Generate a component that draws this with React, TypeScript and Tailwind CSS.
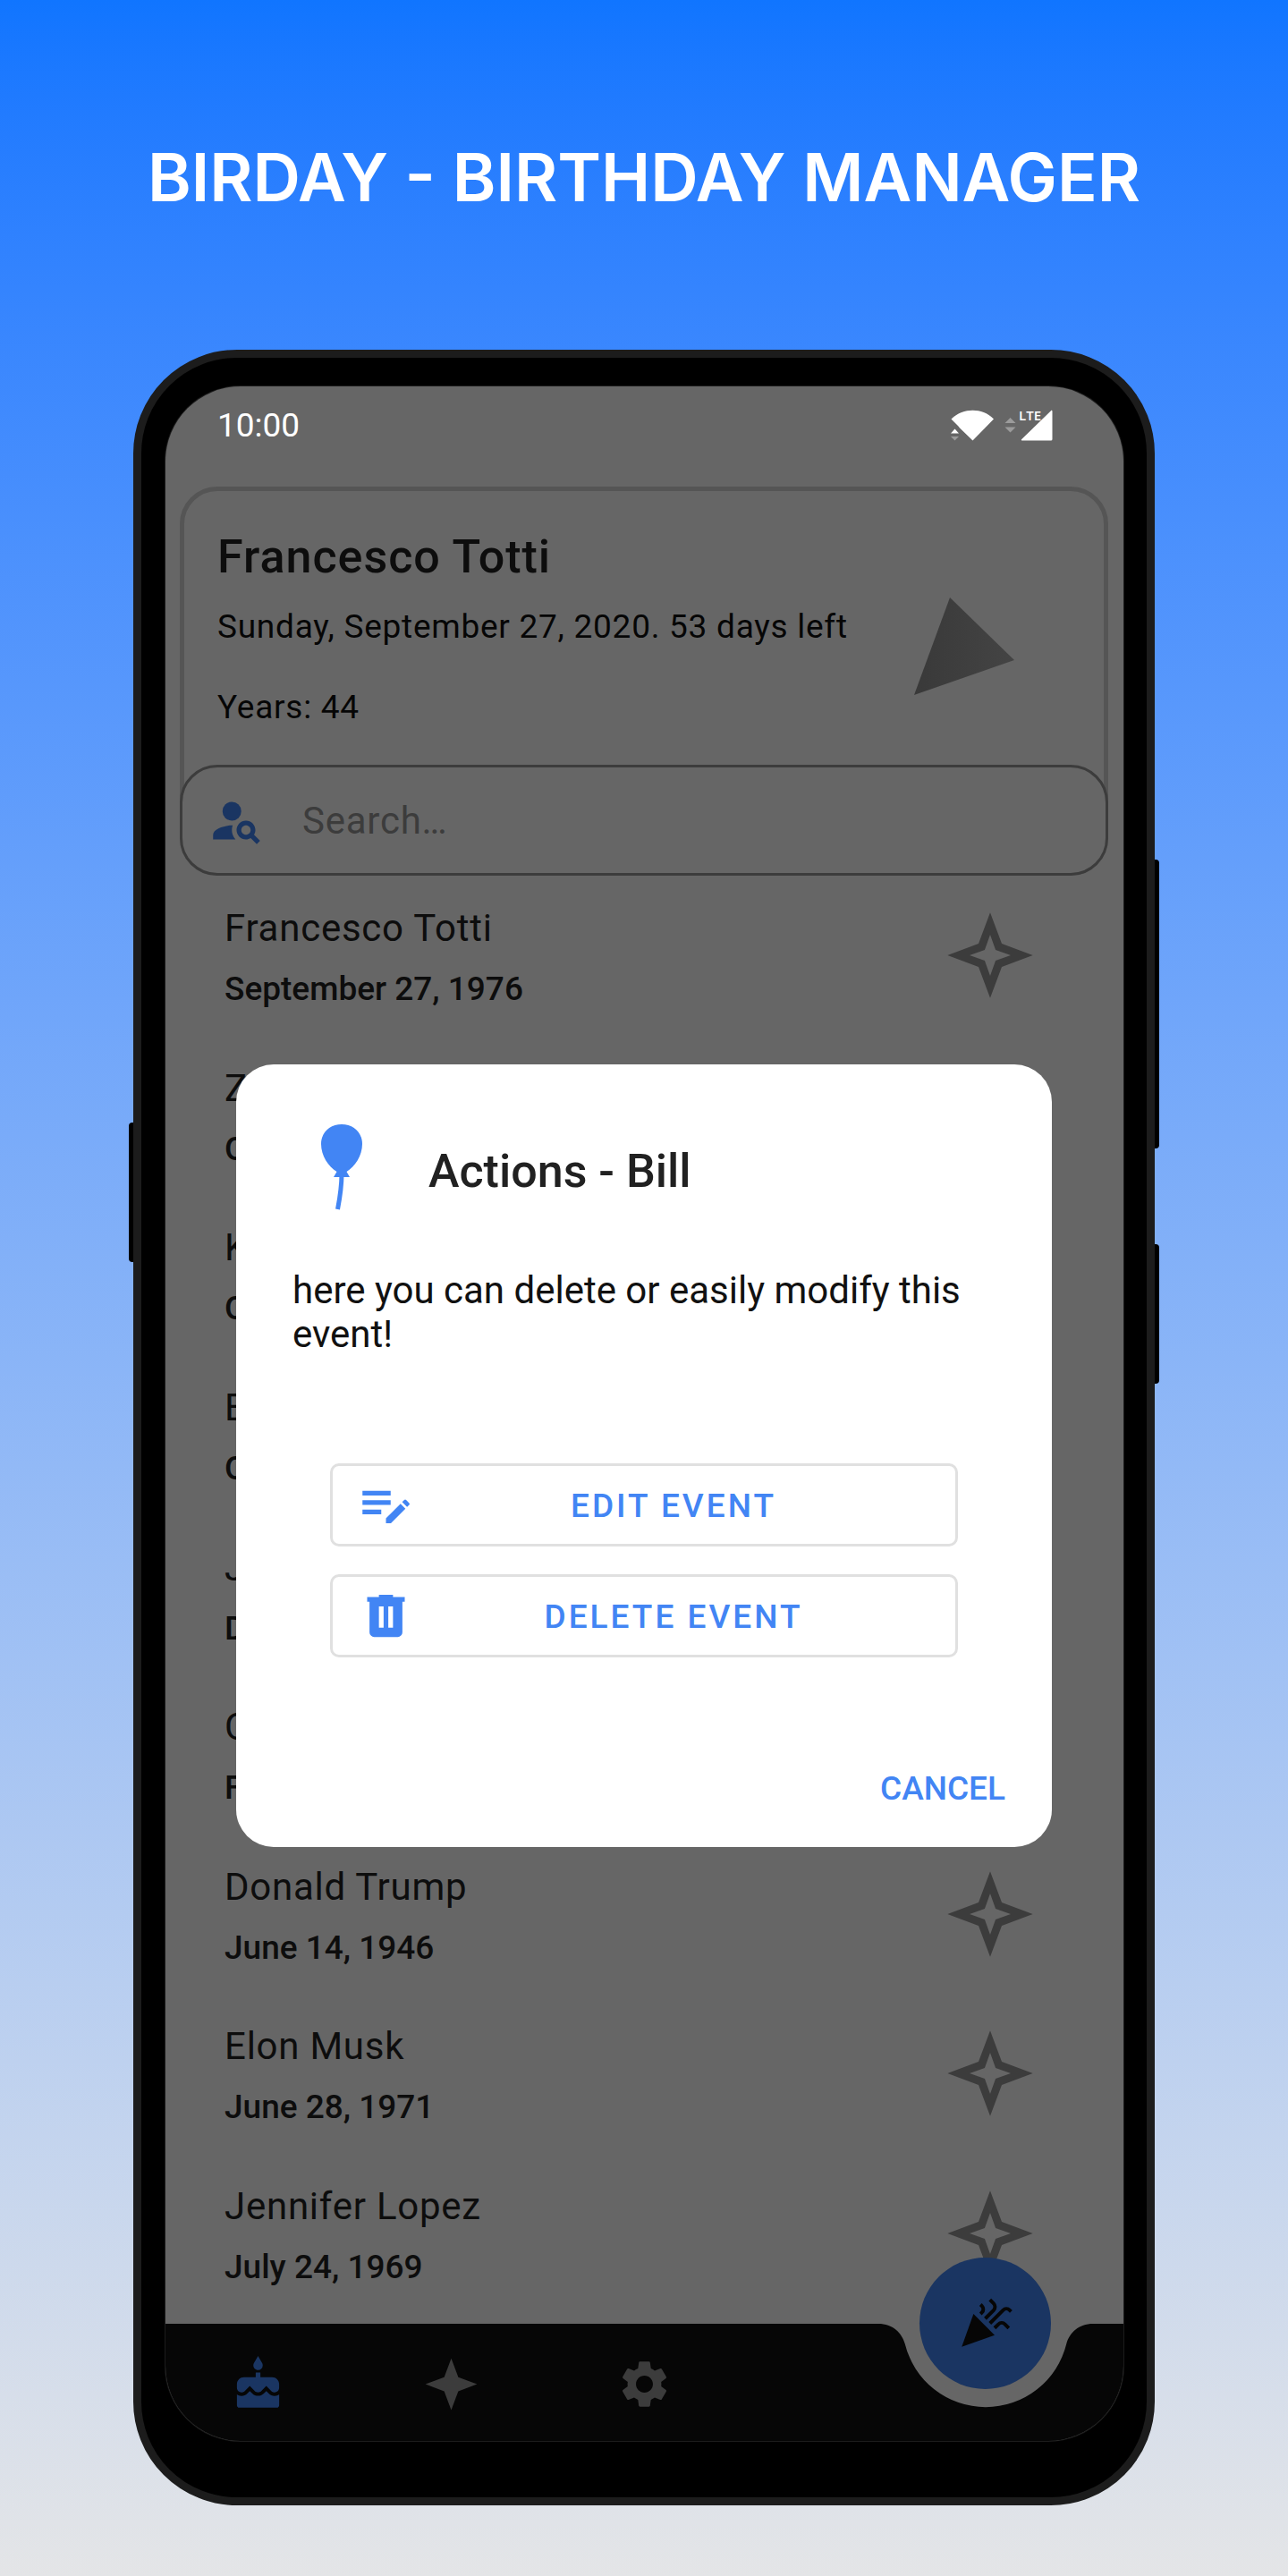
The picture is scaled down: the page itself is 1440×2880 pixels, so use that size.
import { MdCake, MdSettings, MdPersonSearch } from "react-icons/md";

type Person = { name: string; date: string };

const people: Person[] = [
  { name: "Francesco Totti", date: "September 27, 1976" },
  { name: "Zlatan Ibra", date: "October 3, 1981" },
  { name: "Kim Kard", date: "October 21, 1980" },
  { name: "Bill", date: "October 28, 1955" },
  { name: "Jay", date: "December 4, 1969" },
  { name: "Cristiano", date: "February 5, 1985" },
  { name: "Donald Trump", date: "June 14, 1946" },
  { name: "Elon Musk", date: "June 28, 1971" },
  { name: "Jennifer Lopez", date: "July 24, 1969" },
];

function StatusIcons() {
  return (
    <svg viewBox="0 0 114 36" className="h-9 w-[114px] overflow-visible" fill="#fff" aria-label="Wi-Fi and LTE signal">
      <path d="M0.5 10.5C8 3.5 16 .8 24.500 .8S41 3.500 48 10.500L24.500 34.500 10 20.500 8 18z" />
      <path d="M0 26.500l4.500-5 4.500 5z" />
      <path d="M0 30h9l-4.500 4.500z" opacity=".35" />
      <path d="M60.500 15l6-6 6 6zM60.500 19.500h12l-6 6z" opacity=".35" />
      <path d="M113.500 2v31a1.500 1.500 0 0 1-1.500 1.500H80c-1.200 0-1.500-.8-.7-1.600L112 1.200c.8-.8 1.500-.2 1.500.8z" />
      <text x="76" y="12" fontSize="15" fontWeight="600" fontFamily="Open Sans, sans-serif">LTE</text>
    </svg>
  );
}

function StarOutline() {
  return (
    <svg viewBox="0 0 24 24" className="size-[104px]" fill="#3c3c3c" fillRule="evenodd" aria-hidden="true">
      <path d="M12 1l3 8 8 3-8 3-3 8-3-8-8-3 8-3zM12 6.700l-1.400 3.900L6.700 12l3.900 1.400L12 17.300l1.400-3.900L17.300 12l-3.900-1.400z" />
    </svg>
  );
}

function Balloon() {
  return (
    <svg viewBox="0 0 48 96" className="h-24 w-12" fill="#4285f4" aria-hidden="true">
      <path d="M24 0C37 0 47 9 47 22c0 13-8 25-17.500 31l3.500 6H15l3.500-6C9 47 1 35 1 22 1 9 11 0 24 0z" />
      <path d="M24 55c0 14-2 27-4.500 40" fill="none" stroke="#4285f4" strokeWidth="5" />
    </svg>
  );
}

function EditIcon() {
  return (
    <svg viewBox="0 0 24 24" className="size-[63px]" fill="currentColor" aria-hidden="true">
      <path d="M2 6h12v2H2zM2 10h12v2H2zM2 14h8v2H2zM12 17.700l6.200-6.200 2.100 2.100-6.200 6.200H12zM18.900 10.800l.9-.9q.4-.4.8 0l1.300 1.300q.4.4 0 .8l-.9.9z" />
    </svg>
  );
}

function TrashIcon() {
  return (
    <svg viewBox="0 0 24 24" className="size-[63px]" fill="currentColor" fillRule="evenodd" aria-hidden="true">
      <path d="M4 4h5V3h6v1h5v2h-1v13a2 2 0 0 1-2 2H7a2 2 0 0 1-2-2V6H4zM9 8v9h2V8zM13 8v9h2V8z" />
    </svg>
  );
}

function PartyIcon() {
  return (
    <svg viewBox="0 0 24 24" className="size-[63px]" fill="#060606" aria-hidden="true">
      <path d="M2 22l14-5-9-9z" />
      <path d="M14.530 12.530l5.590-5.590a1.250 1.250 0 0 1 1.770 0l.59.59 1.060-1.060-.59-.59a2.758 2.758 0 0 0-3.890 0l-5.590 5.590zM10.060 6.880l-.59.59 1.060 1.060.59-.59a2.758 2.758 0 0 0 0-3.890l-.59-.59-1.060 1.070.59.590c.48.480.48 1.280 0 1.760zM17.060 11.880l-1.590 1.590 1.060 1.060 1.590-1.590a1.250 1.250 0 0 1 1.770 0l1.610 1.610 1.060-1.060-1.610-1.610a2.758 2.758 0 0 0-3.890 0zM15.060 5.880l-3.590 3.590 1.060 1.060 3.590-3.590a2.758 2.758 0 0 0 0-3.890l-1.590-1.590-1.060 1.060 1.590 1.590c.48.490.48 1.290 0 1.770z" />
    </svg>
  );
}

function Row({ name, date }: Person) {
  return (
    <li className="flex flex-1 items-center justify-between pr-[97px] pl-[66px]">
      <div className="pt-2 text-[#0d0d0d]">
        <p className="text-[42px] leading-[60px] tracking-[0.018em]">{name}</p>
        <p className="mt-2 text-[37px] leading-[60px] font-medium">{date}</p>
      </div>
      <button type="button" aria-label={`Favorite ${name}`}>
        <StarOutline />
      </button>
    </li>
  );
}

function Dialog() {
  return (
    <div
      role="dialog"
      aria-labelledby="dialog-title"
      className="flex w-full flex-col rounded-[42px] bg-white text-[#111]"
    >
      <div className="flex items-center gap-[73px] pt-[67px] pl-[94px]">
        <Balloon />
        <h2 id="dialog-title" className="pt-2.5 text-[52px] leading-[60px] font-medium text-[#212121]">
          Actions - Bill
        </h2>
      </div>
      <p className="mt-[65px] px-[63px] text-[42px] leading-[49px]">
        here you can delete or easily modify this event!
      </p>
      <div className="mt-[120px] flex flex-col gap-[31px] px-[105px]">
        <button type="button" className="flex h-[93px] items-center rounded-[10px] border-[3px] border-[#e0e0e0] px-7 text-[#4285f4]">
          <EditIcon />
          <span className="flex-1 pt-1 pl-[3px] text-center text-[37px] font-medium tracking-[3px]">EDIT EVENT</span>
        </button>
        <button type="button" className="flex h-[93px] items-center rounded-[10px] border-[3px] border-[#e0e0e0] px-7 text-[#4285f4]">
          <TrashIcon />
          <span className="flex-1 pt-1 pl-[3px] text-center text-[37px] font-medium tracking-[3px]">DELETE EVENT</span>
        </button>
      </div>
      <div className="flex justify-end pt-[117px] pr-[52px] pb-[35px]">
        <button type="button" className="text-[37px] leading-[60px] font-medium text-[#4285f4]">
          CANCEL
        </button>
      </div>
    </div>
  );
}

export default function App() {
  return (
    <main className="flex min-h-screen flex-col items-center bg-linear-to-b from-[#1075ff] to-[#e4e5e7] px-[149px] pb-[79px] font-['Roboto',sans-serif]">
      <h1 className="pt-[150px] pb-[145px] text-center font-['Inter',sans-serif] text-[74px] leading-[96px] font-semibold whitespace-nowrap text-white">
        BIRDAY - BIRTHDAY MANAGER
      </h1>

      <div className="relative w-full max-w-[1142px]">
        <div className="absolute top-[864px] -left-[5px] h-[156px] w-4 rounded bg-black" />
        <div className="absolute top-[570px] -right-[5px] h-[323px] w-4 rounded bg-black" />
        <div className="absolute top-[1000px] -right-[5px] h-[156px] w-4 rounded bg-black" />

        <div className="relative flex aspect-[1142/2410] flex-col rounded-[116px] border-[9px] border-[#1c1c1c] bg-black pt-8 pr-[26px] pb-[63px] pl-[27px]">
          <div className="relative flex flex-1 flex-col overflow-hidden rounded-[84px] bg-[#666] ring-1 ring-[#1c1c1c]">
            <header className="flex items-center justify-between pt-[18px] pr-[79px] pl-[58px] text-white">
              <span className="text-[37px] leading-[52px]">10:00</span>
              <StatusIcons />
            </header>

            <section className="mr-[17px] ml-4 mt-[42px] rounded-[42px] border-[5px] border-[#555]">
              <div className="flex items-center justify-between pt-11 pr-[100px] pl-[37px]">
                <div>
                  <h2 className="text-[52px] leading-[60px] font-medium tracking-[1px] text-[#0d0d0d]">Francesco Totti</h2>
                  <p className="mt-[23px] text-[37px] leading-[50px] tracking-[0.02em] text-[#060606]">
                    Sunday, September 27, 2020. 53 days left
                  </p>
                  <p className="mt-10 text-[37px] leading-[50px] tracking-[0.02em] text-[#060606]">Years: 44</p>
                </div>
                <svg viewBox="0 0 112 110" className="mb-[38px] h-[110px] w-28 self-end" aria-hidden="true">
                  <defs>
                    <linearGradient id="cone">
                      <stop offset="0" stopColor="#393939" />
                      <stop offset="1" stopColor="#444" />
                    </linearGradient>
                  </defs>
                  <path d="M40 0l72 70L0 109z" fill="url(#cone)" />
                </svg>
              </div>
              <label className="-mx-[5px] mt-[39px] -mb-[5px] flex h-[124px] items-center gap-[42px] rounded-[42px] border-[3px] border-[#3c3c3c] bg-[#666] pl-[29px]">
                <MdPersonSearch className="size-[63px] text-[#1a3562]" />
                <input
                  type="text"
                  aria-label="Search"
                  placeholder="Search…"
                  className="min-w-0 flex-1 text-[42px] tracking-[0.018em] text-[#0d0d0d] outline-none placeholder:text-[#3c3c3c]"
                />
              </label>
            </section>

            <ul className="flex flex-1 flex-col pb-3">
              {people.map((p) => (
                <Row key={p.name} name={p.name} date={p.date} />
              ))}
            </ul>

            <nav className="relative flex h-[131px] items-center gap-[153px] bg-[#060606] pt-1 pl-[72px] text-[#3c3c3c]">
              <button type="button" aria-label="Birthdays" className="text-[#1a3562]">
                <MdCake className="size-[63px]" />
              </button>
              <button type="button" aria-label="Favorites">
                <svg viewBox="0 0 24 24" className="size-[63px]" fill="currentColor">
                  <path d="M12 1l3 8 8 3-8 3-3 8-3-8-8-3 8-3z" />
                </svg>
              </button>
              <button type="button" aria-label="Settings">
                <MdSettings className="size-[63px]" />
              </button>
              <svg viewBox="0 0 240 94" className="absolute top-0 right-[34px] h-[94px] w-60" fill="#666" aria-hidden="true">
                <path d="M0 0C16 0 26 10 29.600 22A93 93 0 0 0 210.400 22C214 10 224 0 240 0z" />
              </svg>
              <button
                type="button"
                aria-label="Add birthday"
                className="absolute -top-[74px] right-[81px] flex size-[147px] items-center justify-center rounded-full bg-[#1a3562]"
              >
                <PartyIcon />
              </button>
            </nav>

            <div className="absolute inset-0 flex items-center pt-[93px] pr-20 pl-[79px]">
              <Dialog />
            </div>
          </div>
        </div>
      </div>
    </main>
  );
}
